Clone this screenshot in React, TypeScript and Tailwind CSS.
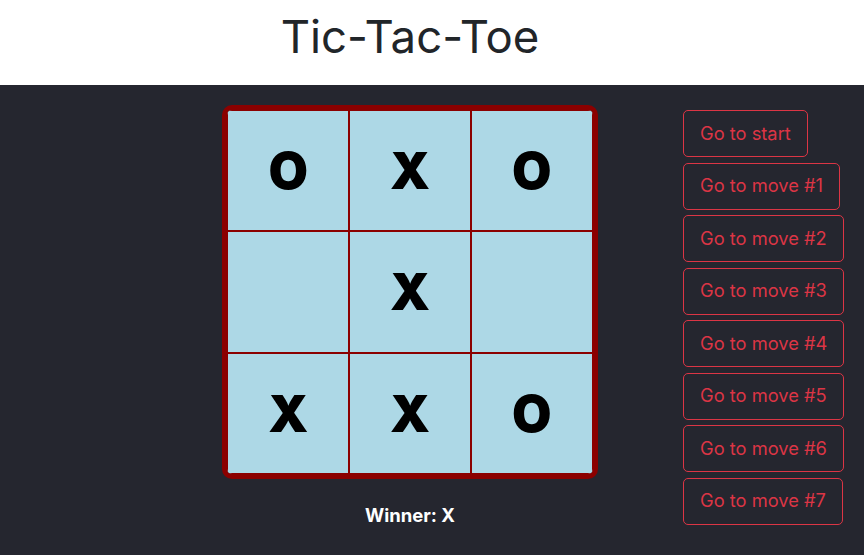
import React from 'react'

const squares = ['O', 'X', 'O', null, 'X', null, 'X', 'X', 'O']
const moves = ['Go to start', 'Go to move #1', 'Go to move #2', 'Go to move #3', 'Go to move #4', 'Go to move #5', 'Go to move #6', 'Go to move #7']

export default function App() {
  return (
    <div className="min-h-[555px] bg-[#25262f] font-['Inter',sans-serif]">
      {/* Header */}
      <header className="h-[85px] bg-white pl-[222px]">
        <h1 className="w-[376px] pt-[8px] text-center text-[45.5px] leading-[58px] text-[#212529]">Tic-Tac-Toe</h1>
      </header>

      <main className="flex pl-[222px] pt-5">
        <div className="flex w-[376px] flex-col items-center">
          <div className="grid grid-cols-3 overflow-hidden rounded-[10px] border-[5px] border-[#8b0000]">
            {squares.map((s, i) => (
              <div
                key={i}
                className="flex h-[121.3px] w-[121.7px] items-center justify-center border border-[#8b0000] bg-[#add8e6] text-[51px] font-black leading-none text-black"
              >
                {s}
              </div>
            ))}
          </div>
          <p className="mt-[23px] text-[18.5px] font-bold text-white">Winner: X</p>
        </div>

        <ol className="ml-[85px] flex flex-col items-start gap-[5.5px] pt-[5px]">
          {moves.map((m) => (
            <li key={m}>
              <button className="h-[47px] rounded-[5px] border border-[#dc3545] px-4 text-[18.3px] text-[#dc3545]">
                {m}
              </button>
            </li>
          ))}
        </ol>
      </main>
    </div>
  )
}
